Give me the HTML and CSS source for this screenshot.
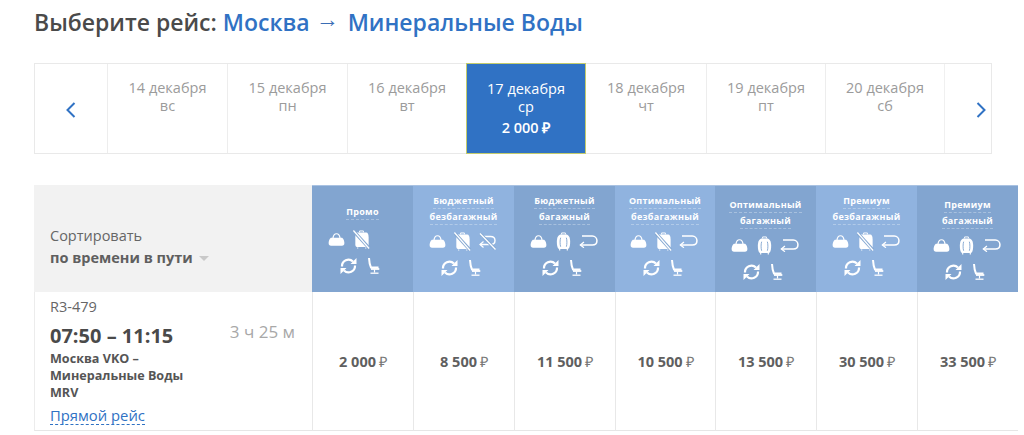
FILE: index.html
```html
<!DOCTYPE html>
<html lang="ru">
<head>
<meta charset="utf-8">
<title>Выберите рейс</title>
<link rel="stylesheet" href="styles.css">
</head>
<body>
<svg class="defs" width="0" height="0" aria-hidden="true">
  <symbol id="i-bag" viewBox="0 0 18 14"><path d="M5.2 5.500C5.600 2.200 7 .8 9 .8s3.400 1.400 3.800 4.700" fill="none" stroke="#fff" stroke-width="1.300"/><path d="M3.500 5h11c1.500 0 3 3 3 5.800 0 2-1 3-2.600 3H3.100C1.500 13.800.5 12.800.5 10.800.5 8 2 5 3.500 5z" fill="#fff"/></symbol>
  <symbol id="i-case" viewBox="0 0 16 20"><path d="M6 2.500V1h4v1.500" fill="none" stroke="#fff" stroke-width="1"/><path d="M5.500 2.500h5C13 2.500 15 5 15 10c0 4-.6 7.500-2.500 8h-9C1.600 17.500 1 14 1 10c0-5 2-7.500 4.500-7.500z" fill="#fff"/><path d="M5 6c-.8 2.500-.8 7 0 9.500M11 6c.8 2.500.8 7 0 9.500" fill="none" stroke="#85a8d2" stroke-width="1"/><path d="M4 18v1.500M12 18v1.500" stroke="#fff" stroke-width="1.200"/></symbol>
  <symbol id="i-nocase" viewBox="0 0 18 20"><path d="M7 2.500V1h4v1.500" fill="none" stroke="#fff" stroke-width="1"/><path d="M4 2.500h10c1.500 0 2.500 2 2.500 5v8c0 1.500-1 2.500-2.500 2.500H5c-1.500 0-2.500-1-2.500-2.500v-8c0-3 .5-5 1.500-5z" fill="#fff"/><path d="M1 1.500L17 19" stroke="#85a8d2" stroke-width="3.400"/><path d="M.5.500L17 19.500" stroke="#fff" stroke-width="1.300"/><path d="M5 18.500v1M13.500 18.500v1" stroke="#fff" stroke-width="1.200"/></symbol>
  <symbol id="i-ret" viewBox="0 0 18 12"><path d="M1.500 9.300H12.500c2.500 0 4.300-1.600 4.300-4S15 1 12.500 1H3" fill="none" stroke="#fff" stroke-width="1.400"/><path d="M4.800 6.500L1.500 9.300 4.800 11.700" fill="none" stroke="#fff" stroke-width="1.200"/></symbol>
  <symbol id="i-noret" viewBox="0 0 18 17"><path d="M1.500 11.500H12c2.500 0 4.500-1.600 4.500-4S14.500 3.500 12 3.500H3" fill="none" stroke="#fff" stroke-width="1.400"/><path d="M5 8.500L1.500 11.500 5 14.500" fill="none" stroke="#fff" stroke-width="1.200"/><path d="M2 1L16.500 16" stroke="#85a8d2" stroke-width="3.200"/><path d="M1.500.5L17 16.500" stroke="#fff" stroke-width="1.300"/></symbol>
  <symbol id="i-sync" viewBox="0 0 16 16"><path d="M1.500 8.500a6.500 6.500 0 0 1 11-5" fill="none" stroke="#fff" stroke-width="2.200"/><path d="M14.500 7.500a6.500 6.500 0 0 1-11 5" fill="none" stroke="#fff" stroke-width="2.200"/><path d="M10 6h6V0zM6 10H0v6z" fill="#fff"/></symbol>
  <symbol id="i-seat" viewBox="0 0 12 16"><path d="M1.500 0c.2 3.800.8 7 2 9.600h7.500" fill="none" stroke="#fff" stroke-width="2"/><path d="M3.500 11h8.300" stroke="#fff" stroke-width="1.800"/><path d="M7 11.500v3" stroke="#fff" stroke-width="1.200"/><path d="M3 15.200h8" stroke="#fff" stroke-width="1.300"/></symbol>
</svg>

<main class="page">
  <h1 class="heading">Выберите рейс: <span class="route">Москва <span class="arrow">→</span> Минеральные Воды</span></h1>

  <nav class="dates">
    <a class="nav nav-prev"><svg width="10" height="16" viewBox="0 0 10 16"><path d="M8.500 1L1.500 8l7 7" fill="none" stroke="#3072c4" stroke-width="2"/></svg></a>
    <a class="day"><span>14 декабря</span><span>вс</span></a>
    <a class="day"><span>15 декабря</span><span>пн</span></a>
    <a class="day day-narrow"><span>16 декабря</span><span>вт</span></a>
    <a class="day day-active"><span>17 декабря</span><span>ср</span><b class="day-price">2 000 ₽</b></a>
    <a class="day"><span>18 декабря</span><span>чт</span></a>
    <a class="day day-narrow"><span>19 декабря</span><span>пт</span></a>
    <a class="day day-narrow"><span>20 декабря</span><span>сб</span></a>
    <a class="nav nav-next"><svg width="10" height="16" viewBox="0 0 10 16"><path d="M1.500 1l7 7-7 7" fill="none" stroke="#3072c4" stroke-width="2"/></svg></a>
  </nav>

  <section class="fares">
    <div class="sort">
      <span class="sort-label">Сортировать</span>
      <span class="sort-value">по времени в пути <i class="caret"></i></span>
    </div>

    <div class="tariff tariff-one">
      <div class="tariff-name"><span>Промо</span></div>
      <div class="icons"><svg class="ic ic-bag"><use href="#i-bag"/></svg><svg class="ic ic-case"><use href="#i-nocase"/></svg><span class="ic-slot"></span></div>
      <div class="icons"><svg class="ic ic-sync"><use href="#i-sync"/></svg><svg class="ic ic-seat"><use href="#i-seat"/></svg></div>
    </div>
    <div class="tariff tariff-light">
      <div class="tariff-name"><span>Бюджетный</span><span>безбагажный</span></div>
      <div class="icons"><svg class="ic ic-bag"><use href="#i-bag"/></svg><svg class="ic ic-case"><use href="#i-nocase"/></svg><svg class="ic ic-noret"><use href="#i-noret"/></svg></div>
      <div class="icons"><svg class="ic ic-sync"><use href="#i-sync"/></svg><svg class="ic ic-seat"><use href="#i-seat"/></svg></div>
    </div>
    <div class="tariff">
      <div class="tariff-name"><span>Бюджетный</span><span>багажный</span></div>
      <div class="icons"><svg class="ic ic-bag"><use href="#i-bag"/></svg><svg class="ic ic-case"><use href="#i-case"/></svg><svg class="ic ic-ret"><use href="#i-ret"/></svg></div>
      <div class="icons"><svg class="ic ic-sync"><use href="#i-sync"/></svg><svg class="ic ic-seat"><use href="#i-seat"/></svg></div>
    </div>
    <div class="tariff tariff-light">
      <div class="tariff-name"><span>Оптимальный</span><span>безбагажный</span></div>
      <div class="icons"><svg class="ic ic-bag"><use href="#i-bag"/></svg><svg class="ic ic-case"><use href="#i-nocase"/></svg><svg class="ic ic-ret"><use href="#i-ret"/></svg></div>
      <div class="icons"><svg class="ic ic-sync"><use href="#i-sync"/></svg><svg class="ic ic-seat"><use href="#i-seat"/></svg></div>
    </div>
    <div class="tariff tariff-low">
      <div class="tariff-name"><span>Оптимальный</span><span>багажный</span></div>
      <div class="icons"><svg class="ic ic-bag"><use href="#i-bag"/></svg><svg class="ic ic-case"><use href="#i-case"/></svg><svg class="ic ic-ret"><use href="#i-ret"/></svg></div>
      <div class="icons"><svg class="ic ic-sync"><use href="#i-sync"/></svg><svg class="ic ic-seat"><use href="#i-seat"/></svg></div>
    </div>
    <div class="tariff tariff-light">
      <div class="tariff-name"><span>Премиум</span><span>безбагажный</span></div>
      <div class="icons"><svg class="ic ic-bag"><use href="#i-bag"/></svg><svg class="ic ic-case"><use href="#i-nocase"/></svg><svg class="ic ic-ret"><use href="#i-ret"/></svg></div>
      <div class="icons"><svg class="ic ic-sync"><use href="#i-sync"/></svg><svg class="ic ic-seat"><use href="#i-seat"/></svg></div>
    </div>
    <div class="tariff tariff-low">
      <div class="tariff-name"><span>Премиум</span><span>багажный</span></div>
      <div class="icons"><svg class="ic ic-bag"><use href="#i-bag"/></svg><svg class="ic ic-case"><use href="#i-case"/></svg><svg class="ic ic-ret"><use href="#i-ret"/></svg></div>
      <div class="icons"><svg class="ic ic-sync"><use href="#i-sync"/></svg><svg class="ic ic-seat"><use href="#i-seat"/></svg></div>
    </div>

    <div class="flight">
      <div class="flight-no">R3-479</div>
      <div class="flight-times"><strong>07:50 – 11:15</strong><span class="flight-dur">3 ч 25 м</span></div>
      <div class="flight-route">Москва VKO –<br>Минеральные Воды<br>MRV</div>
      <a class="flight-direct">Прямой рейс</a>
    </div>
    <div class="price">2 000 <i>₽</i></div>
    <div class="price">8 500 <i>₽</i></div>
    <div class="price">11 500 <i>₽</i></div>
    <div class="price">10 500 <i>₽</i></div>
    <div class="price">13 500 <i>₽</i></div>
    <div class="price">30 500 <i>₽</i></div>
    <div class="price">33 500 <i>₽</i></div>
  </section>
</main>
</body>
</html>
```
FILE: styles.css
```css
* { box-sizing: border-box; }
html, body { margin: 0; background: #fff; overflow: hidden; }
body { font-family: "Open Sans", "Liberation Sans", sans-serif; color: #555; }
.defs { display: block; height: 0; }
.page { padding: 0 0 0 34px; width: 1024px; height: 435px; }

.heading { margin: 0; padding-top: 6px; height: 63px; font-size: 23px; line-height: 32px; font-weight: 600; color: #4a4a4a; }
.route { color: #3072c4; }
.arrow { font-family: "Liberation Sans", sans-serif; font-size: 23px; line-height: 0; font-weight: 400; vertical-align: 4px; margin-right: 3px; color: #3a6db5; }

.dates { display: flex; width: 958px; height: 91px; border: 1px solid #e9e9e9; }
.nav { width: 72px; flex: none; display: flex; align-items: center; justify-content: center; padding-top: 3px; }
.nav-next { width: 47px; border-left: 1px solid #f0f0f0; padding-left: 26px; }
.day { width: 120px; flex: none; display: flex; flex-direction: column; align-items: center; padding-top: 15px; font-size: 14.500px; line-height: 18px; color: #9b9b9b; border-left: 1px solid #ededed; }
.day-narrow { width: 119px; }
.day-active { width: 120px; margin: -1px 0; padding-top: 16px; background: #3072c4; color: #fff; border: 1px solid #c3cb6d; }
.day-active + .day { border-left: 0; }
.day-price { margin-top: 3px; font-size: 14.500px; font-weight: 600; }

.fares { margin-top: 31px; width: 984px; display: grid; grid-template-columns: 278px 101px 101px 101px 100px 101px 101px 101px; grid-template-rows: 107px 139px; }
.sort { background: #f2f2f2; padding: 41px 0 0 16px; display: flex; flex-direction: column; }
.sort-label { font-size: 14.500px; line-height: 20px; color: #666; }
.sort-value { margin-top: 2px; font-size: 14.500px; line-height: 20px; font-weight: 700; color: #5f5f5f; }
.caret { display: inline-block; margin-left: 2px; vertical-align: 2px; border: 5px solid transparent; border-top: 5px solid #c9c9c9; border-bottom: 0; }

.tariff { background: #82a5d0; border-top: 1px solid #a9c2e2; padding-top: 7px; color: #fff; display: flex; flex-direction: column; align-items: center; }
.tariff-light { background: #90b3df; }
.tariff-one { padding-top: 18px; }
.tariff-low { padding-top: 11px; }
.tariff-name { display: flex; flex-direction: column; align-items: center; height: 32px; margin-bottom: 4px; font-size: 9px; line-height: 15px; font-weight: 700; letter-spacing: .3px; }
.tariff-one .tariff-name { height: 17px; margin-bottom: 6px; }
.tariff-name span { display: block; height: 16px; border-bottom: 1px dashed rgba(255,255,255,.3); }

.icons { display: flex; justify-content: center; align-items: center; height: 25px; padding-right: 3px; }
.icons + .icons { margin-top: 1px; }
.ic { flex: none; width: 25px; height: 16px; overflow: visible; }
.ic-bag { height: 13px; }
.ic-case { height: 19px; }
.ic-ret { height: 13px; }
.ic-noret { height: 17px; }
.ic-sync { height: 16px; }
.ic-seat { height: 16px; }
.ic-slot { width: 25px; }

.flight { border-left: 1px solid #ececec; border-bottom: 1px solid #e6e6e6; padding: 6px 0 0 15px; }
.flight-no { font-size: 14.500px; line-height: 18px; color: #666; }
.flight-times { display: flex; align-items: flex-start; width: 246px; justify-content: space-between; margin-top: 6px; }
.flight-times strong { font-size: 20px; line-height: 28px; font-weight: 700; color: #4a4a4a; }
.flight-dur { font-size: 17px; line-height: 20px; color: #a8a8a8; padding-right: 1px; }
.flight-route { font-size: 12.600px; line-height: 17px; font-weight: 700; color: #555; }
.flight-direct { display: inline-block; margin-top: 6px; font-size: 14.800px; line-height: 17px; color: #3072c4; border-bottom: 1px dashed #3072c4; }

.price { display: flex; align-items: center; justify-content: center; border-left: 1px solid #e8e8e8; border-bottom: 1px solid #e6e6e6; font-size: 14.500px; font-weight: 700; color: #5f5f5f; }
.price i { font-style: normal; font-weight: 400; margin-left: 3px; color: #777; }
```
